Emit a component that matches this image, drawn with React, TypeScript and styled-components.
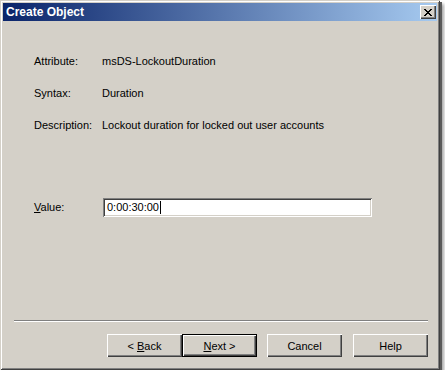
import React from "react";
import styled, { createGlobalStyle } from "styled-components";

const GlobalStyle = createGlobalStyle`
  html, body {
    margin: 0;
    padding: 0;
    background: #ffffff;
  }
  body {
    font-family: "Liberation Sans", Arial, sans-serif;
    font-size: 11px;
    color: #000000;
  }
`;

const Window = styled.div`
  width: 440px;
  height: 370px;
  box-sizing: border-box;
  padding: 3px;
  background: #d4d0c8;
  display: flex;
  flex-direction: column;
  box-shadow:
    inset 1px 1px 0 #d4d0c8,
    inset -1px -1px 0 #404040,
    inset 2px 2px 0 #ffffff,
    inset -2px -2px 0 #808080,
    2px 2px 0 #5a5a5a,
    4px 4px 3px rgba(0, 0, 0, 0.35);
`;

const TitleBar = styled.div`
  height: 18px;
  display: flex;
  align-items: center;
  justify-content: space-between;
  padding: 0 1px 0 3px;
  background: linear-gradient(to right, #0a246a 0%, #a6caf0 100%);
`;

const Title = styled.span`
  color: #ffffff;
  font-weight: bold;
  font-size: 12px;
`;

const CloseButton = styled.button`
  width: 16px;
  height: 14px;
  padding: 0;
  border: none;
  background: #d4d0c8;
  display: flex;
  align-items: center;
  justify-content: center;
  box-shadow:
    inset 1px 1px 0 #ffffff,
    inset -1px -1px 0 #404040,
    inset -2px -2px 0 #808080;
`;

const Body = styled.div`
  flex: 1;
  display: flex;
  flex-direction: column;
  padding: 34px 9px 10px 11px;
`;

const InfoGrid = styled.div`
  display: grid;
  grid-template-columns: 68px 1fr;
  row-gap: 19px;
  padding-left: 20px;
`;

const Label = styled.span`
  line-height: 13px;
  white-space: nowrap;
`;

const ValueText = styled.span`
  line-height: 13px;
  white-space: nowrap;
`;

const ValueRow = styled.div`
  display: grid;
  grid-template-columns: 69px 269px;
  align-items: center;
  padding-left: 20px;
  margin-top: 66px;
`;

const TextBox = styled.div`
  height: 19px;
  box-sizing: border-box;
  background: #ffffff;
  display: flex;
  align-items: center;
  padding-left: 4px;
  line-height: 13px;
  box-shadow:
    inset 1px 1px 0 #808080,
    inset -1px -1px 0 #ffffff,
    inset 2px 2px 0 #404040,
    inset -2px -2px 0 #d4d0c8;
`;

const Caret = styled.span`
  display: inline-block;
  width: 1px;
  height: 13px;
  background: #000000;
  margin-left: 1px;
`;

const Footer = styled.div`
  margin-top: auto;
  display: flex;
  flex-direction: column;
`;

const Separator = styled.div`
  height: 1px;
  background: #808080;
  border-bottom: 1px solid #ffffff;
`;

const ButtonRow = styled.div`
  display: flex;
  justify-content: flex-end;
  margin-top: 12px;
`;

const Button = styled.button<{ $primary?: boolean; $gap?: number }>`
  width: 75px;
  height: 23px;
  margin-left: ${(p) => p.$gap ?? 0}px;
  padding: 0;
  border: none;
  background: #d4d0c8;
  font-family: "Liberation Sans", Arial, sans-serif;
  font-size: 11px;
  color: #000000;
  box-shadow: ${(p) =>
    p.$primary
      ? "inset 0 0 0 1px #000000, inset 1px 1px 0 1px #ffffff, inset -1px -1px 0 1px #404040, inset -2px -2px 0 1px #808080"
      : "inset 1px 1px 0 #ffffff, inset -1px -1px 0 #404040, inset -2px -2px 0 #808080"};
`;

const Key = styled.span`
  text-decoration: underline;
`;

export default function App() {
  return (
    <>
      <GlobalStyle />
      <Window>
        <TitleBar>
          <Title>Create Object</Title>
          <CloseButton aria-label="Close">
            <svg width="8" height="7" viewBox="0 0 8 7" shapeRendering="crispEdges">
              <path
                d="M0 0h2v1h-2zM6 0h2v1h-2zM1 1h2v1h-2zM5 1h2v1h-2zM2 2h4v1h-4zM3 3h2v1h-2zM2 4h4v1h-4zM1 5h2v1h-2zM5 5h2v1h-2zM0 6h2v1h-2zM6 6h2v1h-2z"
                fill="#000000"
              />
            </svg>
          </CloseButton>
        </TitleBar>
        <Body>
          <InfoGrid>
            <Label>Attribute:</Label>
            <ValueText>msDS-LockoutDuration</ValueText>
            <Label>Syntax:</Label>
            <ValueText>Duration</ValueText>
            <Label>Description:</Label>
            <ValueText>Lockout duration for locked out user accounts</ValueText>
          </InfoGrid>
          <ValueRow>
            <Label>
              <Key>V</Key>alue:
            </Label>
            <TextBox>
              0:00:30:00
              <Caret />
            </TextBox>
          </ValueRow>
          <Footer>
            <Separator />
            <ButtonRow>
              <Button>
                &lt; <Key>B</Key>ack
              </Button>
              <Button $primary>
                <Key>N</Key>ext &gt;
              </Button>
              <Button $gap={10}>Cancel</Button>
              <Button $gap={11}>Help</Button>
            </ButtonRow>
          </Footer>
        </Body>
      </Window>
    </>
  );
}
